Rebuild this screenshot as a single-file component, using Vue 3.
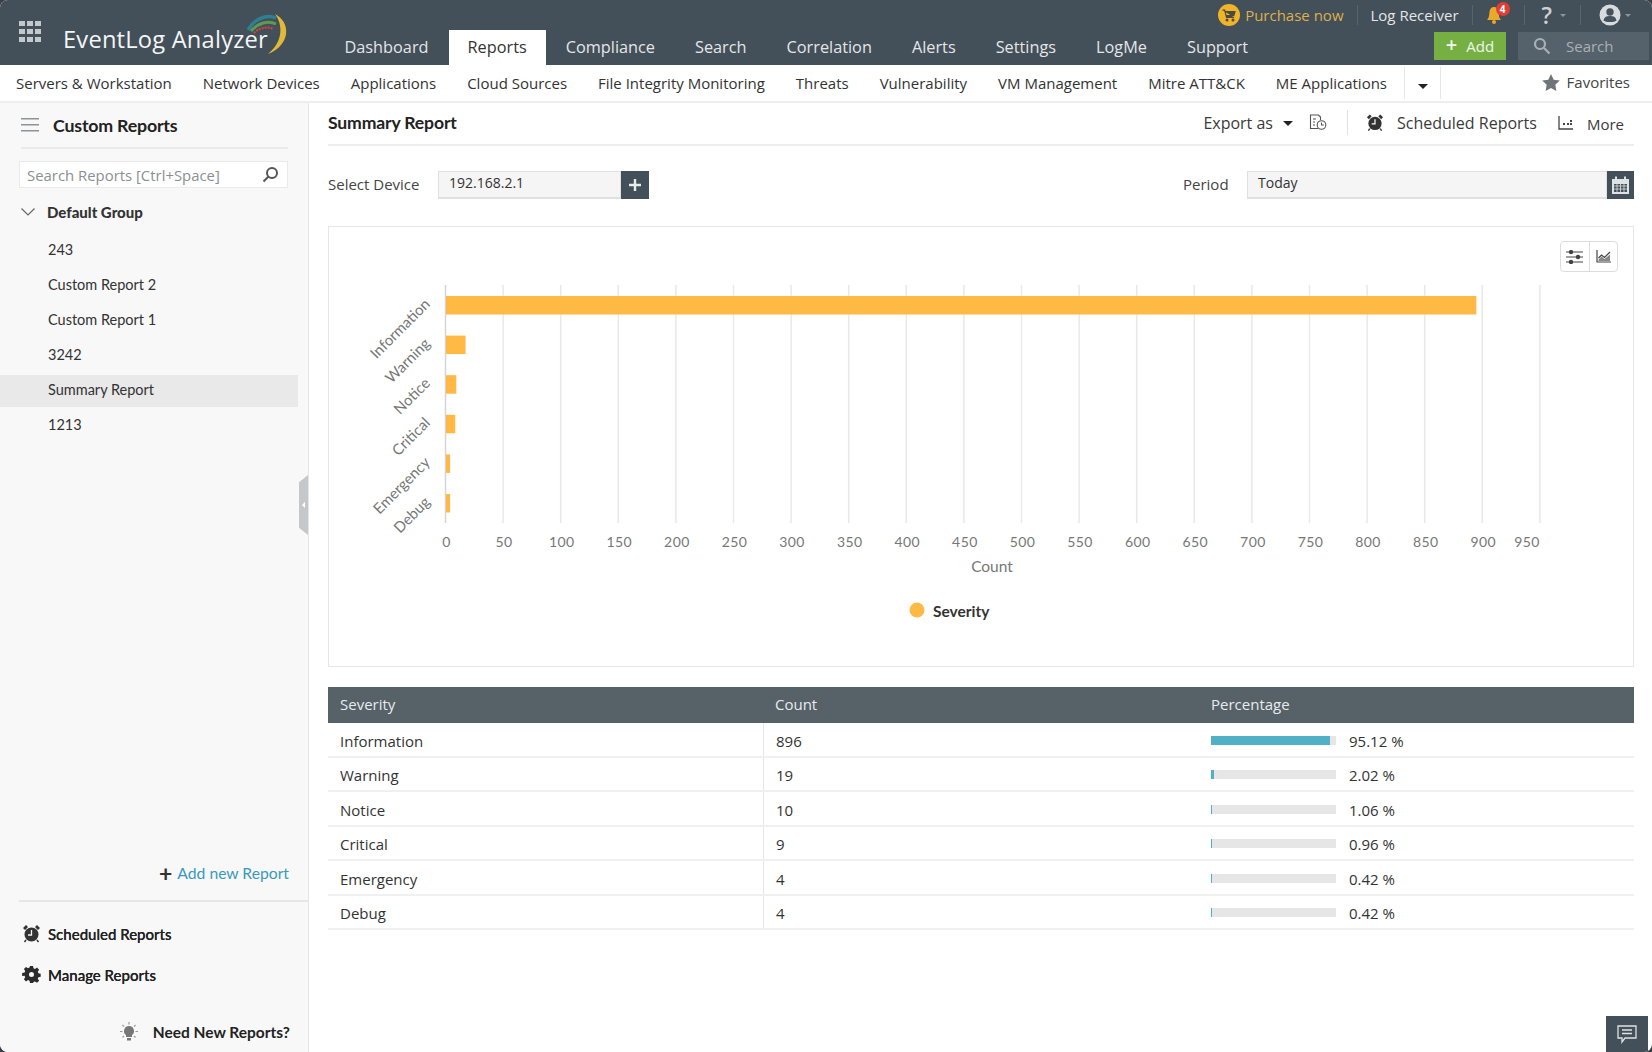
<script setup>
const tabs = ['Dashboard', 'Reports', 'Compliance', 'Search', 'Correlation', 'Alerts', 'Settings', 'LogMe', 'Support']
const subs = ['Servers & Workstation', 'Network Devices', 'Applications', 'Cloud Sources', 'File Integrity Monitoring', 'Threats', 'Vulnerability', 'VM Management', 'Mitre ATT&CK', 'ME Applications']
const reports = ['243', 'Custom Report 2', 'Custom Report 1', '3242', 'Summary Report', '1213']
const rows = [
  { name: 'Information', count: 896, pct: 95.12 },
  { name: 'Warning', count: 19, pct: 2.02 },
  { name: 'Notice', count: 10, pct: 1.06 },
  { name: 'Critical', count: 9, pct: 0.96 },
  { name: 'Emergency', count: 4, pct: 0.42 },
  { name: 'Debug', count: 4, pct: 0.42 }
]
const ticks = Array.from({ length: 20 }, (_, i) => i * 50)
const tx = v => 445.5 + v * 1.152
const barY = i => 296 + i * 39.6
const barW = c => c * (c > 100 ? 1.15 : 1.03)
</script>

<template>
  <div class="app">
    <header class="header">
      <svg class="waffle" width="24" height="24" viewBox="0 0 24 24" fill="#c3c8cc">
        <rect v-for="p in [[1,1],[9,1],[17,1],[1,9],[9,9],[17,9],[1,17],[9,17],[17,17]]" :key="p.join()" :x="p[0]" :y="p[1]" width="6" height="5" />
      </svg>
      <div class="logo">
        <span>EventLog Analyzer</span>
        <svg class="swoosh" width="44" height="44" viewBox="0 0 44 44" fill="none">
          <path d="M1 17C7 6 19 1 29 5" stroke="#2f7f93" stroke-width="3.500" />
          <path d="M4 18C11 10 21 7 29 11" stroke="#5d9a52" stroke-width="3" />
          <path d="M7 20C12 15 20 13 26 16" stroke="#d8453c" stroke-width="2" stroke-dasharray="2 1" />
          <path d="M28 1C44 9 44 32 21 41C35 30 37 13 28 1Z" fill="#e0b83a" />
        </svg>
      </div>
      <nav class="tabs">
        <a v-for="t in tabs" :key="t" class="tab" :class="{ active: t === 'Reports' }">{{ t }}</a>
      </nav>
      <div class="utils">
        <svg width="22" height="22" viewBox="0 0 22 22">
          <circle cx="11" cy="11" r="11" fill="#f0b429" />
          <path d="M4.500 6h2.200l1.800 7.500h7.600M7 7.500h10l-1.200 4.200H8" fill="#4a4a42" stroke="#4a4a42" stroke-width="1.200" />
          <circle cx="9" cy="16" r="1.500" fill="#4a4a42" /><circle cx="15" cy="16" r="1.500" fill="#4a4a42" />
        </svg>
        <span class="purchase">Purchase now</span>
        <i class="usep" />
        <span class="receiver">Log Receiver</span>
        <i class="usep" />
        <span class="bell">
          <svg width="18" height="20" viewBox="0 0 18 20"><path d="M1 16c2-2 2-4 2.500-8C4 4 6 3 8 3s4 1 4.500 5c.5 4 .5 6 2.500 8z" fill="#e9a92b" /><circle cx="8" cy="18" r="2" fill="#e9a92b" /></svg>
          <b>4</b>
        </span>
        <i class="usep" />
        <span class="help">?</span>
        <i class="mini" />
        <i class="usep" />
        <svg width="22" height="22" viewBox="0 0 22 22"><circle cx="11" cy="11" r="10.500" fill="#d9dcde" /><circle cx="11" cy="8" r="3.700" fill="#47535c" /><path d="M4.500 16.500c1-4 3.500-4.500 6.500-4.500s5.500.5 6.500 4.500c-1.500 1-3.500 1.500-6.500 1.500s-5-.5-6.500-1.500z" fill="#47535c" /></svg>
        <i class="mini" />
      </div>
      <div class="actions">
        <button class="add"><em>+</em>Add</button>
        <div class="top-search">
          <svg width="18" height="18" viewBox="0 0 18 18" fill="none" stroke="#a9b0b5" stroke-width="2.200"><circle cx="7" cy="7" r="5" /><path d="M11 11l5.500 5.500" /></svg>
          <span>Search</span>
        </div>
      </div>
    </header>

    <div class="subnav">
      <a v-for="s in subs" :key="s">{{ s }}</a>
      <span class="more-sub"><i /></span>
      <span class="fav">
        <svg width="18" height="17" viewBox="0 0 18 17"><path d="M9 0l2.700 5.700 6.100.8-4.500 4.300 1.100 6.200L9 14l-5.400 3 1.100-6.200L.2 6.500l6.100-.8z" fill="#6f7478" /></svg>
        Favorites
      </span>
    </div>

    <div class="body">
      <aside class="side">
        <div class="side-head">
          <svg width="18" height="14" viewBox="0 0 18 14" fill="#8d9397"><rect width="18" height="1.500" /><rect y="6" width="18" height="1.500" /><rect y="12" width="18" height="1.500" /></svg>
          <strong>Custom Reports</strong>
        </div>
        <div class="side-search">
          <span>Search Reports [Ctrl+Space]</span>
          <svg width="17" height="17" viewBox="0 0 17 17" fill="none" stroke="#555" stroke-width="2"><circle cx="10" cy="7" r="5" /><path d="M6.500 10.500L1.500 15.500" /></svg>
        </div>
        <div class="group">
          <svg width="14" height="8" viewBox="0 0 14 8" fill="none" stroke="#666" stroke-width="1.200"><path d="M.5.500L7 7 13.500.500" /></svg>
          <strong>Default Group</strong>
        </div>
        <ul class="rep-list">
          <li v-for="r in reports" :key="r" :class="{ sel: r === 'Summary Report' }">{{ r }}</li>
        </ul>
        <div class="add-new"><b>+</b><a>Add new Report</a></div>
        <div class="side-foot">
          <div class="foot-item">
            <svg width="19" height="19" viewBox="0 0 19 19"><path d="M1 4l3-3 2 2-3 3zM18 4l-3-3-2 2 3 3z" fill="#333" /><circle cx="9.500" cy="10.500" r="7" fill="#333" /><path d="M9.500 6v5H6" stroke="#f8f8f8" stroke-width="1.300" fill="none" /><path d="M4 16l-1.500 2M15 16l1.500 2" stroke="#333" stroke-width="1.500" /></svg>
            <span>Scheduled Reports</span>
          </div>
          <div class="foot-item">
            <svg width="19" height="19" viewBox="0 0 19 19"><path fill-rule="evenodd" d="M8 1h3l.5 2.300 1.500.6 2-1.300 2.100 2.100-1.300 2 .6 1.500 2.300.5v3l-2.300.5-.6 1.500 1.300 2-2.100 2.100-2-1.300-1.500.6L11 18H8l-.5-2.300-1.500-.6-2 1.300-2.100-2.100 1.300-2-.6-1.500L.1 11V8l2.500-.5.6-1.500-1.300-2L4 1.900l2 1.300 1.500-.6zM9.500 7a2.500 2.500 0 100 5 2.500 2.500 0 000-5z" fill="#2c2c2c" /></svg>
            <span>Manage Reports</span>
          </div>
          <div class="need">
            <svg width="18" height="20" viewBox="0 0 18 20"><path d="M9 4a5 5 0 00-3 9v2h6v-2a5 5 0 00-3-9z" fill="#777" /><rect x="7" y="16" width="4" height="2.500" fill="#777" /><path d="M9 0v2.500M2.500 3l1.500 1.500M15.500 3L14 4.500M0 9.500h2.500M15.500 9.500H18M2.500 15.500L4 14M15.500 15.500L14 14" stroke="#999" stroke-width="1.200" /></svg>
            <strong>Need New Reports?</strong>
          </div>
        </div>
        <div class="handle"><i /></div>
      </aside>

      <main class="main">
        <div class="title-row">
          <h1>Summary Report</h1>
          <div class="tools">
            <span>Export as</span>
            <i class="caret" />
            <svg class="doc" width="18" height="17" viewBox="0 0 18 17" fill="none" stroke="#555" stroke-width="1.100"><path d="M9 14.500H1.500V1h8l2 2v3" /><path d="M4 5h3M4 8h2M4 11h2" /><circle cx="12.500" cy="11" r="4.300" /><path d="M12.500 8.500V11h2.300" /></svg>
            <i class="tool-sep" />
            <svg width="18" height="19" viewBox="0 0 19 19"><path d="M1 4l3-3 2 2-3 3zM18 4l-3-3-2 2 3 3z" fill="#333" /><circle cx="9.500" cy="10.500" r="7" fill="#333" /><path d="M9.500 6v5H6" stroke="#fff" stroke-width="1.300" fill="none" /><path d="M4 16l-1.500 2M15 16l1.500 2" stroke="#333" stroke-width="1.500" /></svg>
            <span class="sched">Scheduled Reports</span>
            <svg class="more-ic" width="16" height="15" viewBox="0 0 16 15" fill="none" stroke="#444" stroke-width="1.300"><path d="M1 1v13h14" /><path d="M5 9h2M9 9h2M12 9h2M12 6h2" stroke-width="1.800" /></svg>
            <span class="more">More</span>
          </div>
        </div>

        <div class="filters">
          <label>Select Device</label>
          <div class="field dev">192.168.2.1</div>
          <button class="plus"><svg width="12" height="12" viewBox="0 0 12 12"><path d="M6 0v12M0 6h12" stroke="#e8eaec" stroke-width="2.400" /></svg></button>
          <label class="period">Period</label>
          <div class="field per">Today</div>
          <button class="cal">
            <svg width="19" height="19" viewBox="0 0 19 19"><path d="M1 3h17v15H1z" fill="#dfe2e4" /><rect x="4" y="0.500" width="2" height="5" fill="#dfe2e4" /><rect x="13" y="0.500" width="2" height="5" fill="#dfe2e4" /><path d="M3 8h13v8H3z" fill="#434f59" /><path d="M3 10h13M3 13h13M6 8v8M9.500 8v8M13 8v8" stroke="#dfe2e4" stroke-width=".8" /></svg>
          </button>
        </div>

        <section class="chart">
          <div class="chart-tools">
            <span>
              <svg width="17" height="14" viewBox="0 0 17 14" stroke="#444" stroke-width="1.200"><path d="M0 2h17M0 7h17M0 12h17" /><circle cx="5" cy="2" r="1.600" fill="#444" /><circle cx="12" cy="7" r="1.600" fill="#444" /><circle cx="5" cy="12" r="1.600" fill="#444" /></svg>
            </span>
            <span>
              <svg width="15" height="13" viewBox="0 0 15 13" fill="none" stroke="#444" stroke-width="1.200"><path d="M1 0v12h14" /><path d="M2.500 8l3-3 3 2.500L14 2" /><path d="M2.500 11V9.500l3-3 3 2.500L14 4.500V11z" fill="#888" stroke="none" /></svg>
            </span>
          </div>
          <svg class="plot" width="1304" height="439" viewBox="329 227 1304 439">
            <g v-for="t in ticks" :key="t">
              <line :x1="tx(t)" :x2="tx(t)" y1="285" y2="523" :stroke="t === 0 ? '#d4d4d4' : '#e8e8e8'" stroke-width="1.500" />
              <text :x="t === 950 ? tx(t) : tx(t) + 1" y="547" :text-anchor="t === 950 ? 'end' : 'middle'" class="tick">{{ t }}</text>
            </g>
            <rect v-for="(r, i) in rows" :key="r.name" x="446" :y="barY(i)" :width="barW(r.count)" height="18.500" fill="#ffb944" />
            <text v-for="(r, i) in rows" :key="'l' + r.name" x="431" :y="305 + i * 39.6" text-anchor="end" class="cat" :transform="`rotate(-45 431 ${305 + i * 39.6})`">{{ r.name }}</text>
            <text x="992" y="572" text-anchor="middle" class="axis">Count</text>
            <circle cx="917" cy="610" r="7.500" fill="#ffb944" />
            <text x="933" y="617" class="legend">Severity</text>
          </svg>
        </section>

        <div class="table">
          <div class="thead">
            <span class="c1">Severity</span><span class="c2">Count</span><span class="c3">Percentage</span>
          </div>
          <div v-for="r in rows" :key="r.name" class="tr">
            <span class="c1">{{ r.name }}</span>
            <span class="c2 bordered">{{ r.count }}</span>
            <span class="c3 pct">
              <i class="track"><i class="fill" :style="{ width: r.pct + '%' }" /></i>
              {{ r.pct.toFixed(2) }} %
            </span>
          </div>
        </div>
        <button class="chat">
          <svg width="20" height="19" viewBox="0 0 20 19" fill="none" stroke="#dfe2e4" stroke-width="1.300"><path d="M1 1h18v12H8l-3 4v-4H1z" /><path d="M5 5h10M5 8.500h10" /></svg>
        </button>
      </main>
    </div>
  </div>
</template>

<style>
html, body { background: #3b4046; }
</style>

<style scoped>
* { box-sizing: border-box; }
.app {
  width: 1652px; height: 1052px; overflow: hidden; background: #fff; border-radius: 8px;
  display: flex; flex-direction: column; font-family: "Open Sans", sans-serif; color: #333; position: relative;
}
.header { height: 65px; background: #434f59; display: flex; flex: none; position: relative; }
.waffle { margin: 20px 0 0 18px; flex: none; }
.logo { position: relative; margin: 23px 0 0 21px; width: 244px; color: #f4f5f6; font-size: 23.700px; font-weight: 500; line-height: 32px; white-space: nowrap; letter-spacing: .2px; flex: none; }
.swoosh { position: absolute; left: 184px; top: -10px; }
.tabs { display: flex; align-items: flex-end; margin-left: 17.500px; }
.tab { height: 35px; padding: 0 20px; line-height: 35px; color: #e3e6e8; font-size: 16.300px; }
.tab.active { background: #fff; color: #333; padding: 0 19px; }
.utils { position: absolute; right: 21px; top: 0; height: 30px; display: flex; align-items: center; font-size: 15px; white-space: nowrap; }
.purchase { color: #dcb04c; margin-left: 5px; }
.usep { width: 1px; height: 20px; background: #58646d; margin: 0 13px; flex: none; }
.receiver { color: #e3e6e8; }
.bell { position: relative; width: 21px; height: 22px; margin: 0 4px 0 0; }
.bell b { position: absolute; right: -3px; top: -2px; width: 14px; height: 14px; background: #e23c35; color: #fff; border-radius: 50%; font-size: 10px; line-height: 14px; text-align: center; }
.help { color: #cdd1d4; font-size: 23px; font-weight: 600; margin: 0 4px; line-height: 24px; }
.mini { width: 0; height: 0; border: 3px solid transparent; border-top: 3px solid #8c959b; margin: 3px 0 0 4px; }
.utils .mini + .usep { margin-left: 14px; margin-right: 18px; }
.actions { margin-left: auto; padding: 32px 3px 0 0; display: flex; gap: 12px; }
.add { width: 72px; height: 28px; background: #76b043; color: #f2f6ee; border: 0; font: 15px "Open Sans", sans-serif; padding: 0; }
.add em { font-style: normal; font-size: 20px; line-height: 16px; margin-right: 9px; font-weight: 600; }
.top-search { width: 131px; height: 28px; background: #56626b; color: #a9b0b5; font-size: 15px; display: flex; align-items: center; padding-left: 15px; gap: 15px; }
.subnav { height: 38px; flex: none; display: flex; align-items: center; padding-left: 16px; border-bottom: 2px solid #eee; font-size: 15px; }
.subnav a { margin-right: 31px; white-space: nowrap; }
.subnav a:nth-child(10) { margin-right: 17px; }
.more-sub { width: 37px; height: 32px; border-left: 1px solid #e6e6e6; border-right: 1px solid #e6e6e6; display: flex; align-items: center; justify-content: center; padding-top: 6px; }
.more-sub i { border: 5px solid transparent; border-top: 5px solid #222; border-bottom: 0; }
.fav { margin-left: auto; padding-right: 22px; display: flex; align-items: center; gap: 7px; color: #444; padding-bottom: 2px; }
.body { flex: 1; display: flex; min-height: 0; }
.side { width: 309px; flex: none; background: #f8f8f8; border-right: 1px solid #e6e6e6; position: relative; display: flex; flex-direction: column; font-family: Lato, sans-serif; font-size: 14.500px; }
.side-head { height: 46px; margin: 0 20px 12px 21px; border-bottom: 2px solid #eaeaea; display: flex; align-items: center; gap: 14px; }
.side-head strong { font-size: 17.800px; font-weight: 700; letter-spacing: -.2px; color: #222; }
.side-search { height: 27px; margin: 0 20px 0 19px; background: #fff; border: 1px solid #eaeaea; display: flex; align-items: center; justify-content: space-between; padding: 0 8px 0 7px; color: #8b8f92; font-family: "Open Sans", sans-serif; font-size: 14.900px; }
.group { height: 47px; display: flex; align-items: center; padding-left: 21px; gap: 12px; font-weight: 700; }
.group strong { font-size: 15px; color: #333; }
.rep-list { list-style: none; margin: -3px 10px 0 0; padding: 0; }
.rep-list li { height: 35px; line-height: 35px; padding-left: 48px; color: #333; }
.rep-list li.sel { background: #e9e9e9; height: 32px; margin-top: 3px; line-height: 30px; }
.add-new { margin-top: auto; padding: 0 19px 17px 0; text-align: right; font-size: 15.700px; display: flex; justify-content: flex-end; align-items: center; gap: 5px; }
.add-new b { font-size: 23px; line-height: 20px; color: #333; }
.add-new a { color: #3a98bd; }
.side-foot { margin-left: 19px; border-top: 2px solid #e6e6e6; height: 152px; display: flex; flex-direction: column; padding-top: 11px; font-size: 15px; }
.foot-item { height: 41px; display: flex; align-items: center; gap: 7px; padding-left: 3px; flex: none; }
.foot-item span { font-weight: 500; color: #222; text-shadow: 0 0 .4px #222; }
.need { margin-top: 27px; display: flex; align-items: center; justify-content: flex-end; gap: 15px; padding-right: 18px; }
.need strong { font-size: 15.500px; font-weight: 700; color: #222; }
.handle { position: absolute; right: 0; top: 372px; width: 9px; height: 60px; background: #c4c8cb; clip-path: polygon(100% 0, 100% 100%, 0 88%, 0 12%); display: flex; align-items: center; justify-content: center; }
.handle i { border: 3px solid transparent; border-right: 3px solid #fff; border-left: 0; }
.main { flex: 1; min-width: 0; padding: 0 18px 0 19px; position: relative; }
.title-row { height: 43px; border-bottom: 2px solid #eee; display: flex; align-items: center; justify-content: space-between; padding-bottom: 2px; }
h1 { margin: 0; font-family: Lato, sans-serif; font-size: 17.600px; font-weight: 700; color: #222; letter-spacing: -.15px; }
.tools { display: flex; align-items: center; font-size: 16px; color: #3a3a3a; padding-right: 10px; }
.caret { border: 5px solid transparent; border-top: 5px solid #222; border-bottom: 0; margin: 2px 0 0 10px; }
.doc { margin-left: 16px; }
.tool-sep { width: 1px; height: 25px; background: #e2e2e2; margin: 0 18px 0 20px; }
.sched { margin-left: 13px; }
.more-ic { margin-left: 21px; }
.more { margin-left: 13px; padding-top: 2px; font-size: 15px; }
.filters { display: flex; align-items: center; margin-top: 25px; font-size: 15px; height: 28px; }
.filters label { width: 110px; padding-bottom: 3px; color: #444; }
.field { height: 28px; background: #f5f5f5; border: 1px solid #e0e0e0; border-bottom-width: 2px; font-size: 14px; padding: 0 0 4px 10px; display: flex; align-items: center; }
.dev { width: 183px; }
.plus, .cal { height: 28px; width: 28px; background: #434f59; border: 0; padding: 0; display: flex; align-items: center; justify-content: center; }
.filters .period { width: 64px; margin-left: auto; flex: none; }
.per { width: 360px; }
.cal { width: 27px; }
.chart { position: relative; height: 441px; margin-top: 27px; border: 1px solid #e6e6e6; }
.plot { display: block; }
.chart-tools { position: absolute; right: 15px; top: 14px; height: 31px; width: 58px; border: 1px solid #dcdcdc; border-radius: 4px; display: flex; }
.chart-tools span { flex: 1; display: flex; align-items: center; justify-content: center; }
.chart-tools span + span { border-left: 1px solid #dcdcdc; }
.tick { font: 14px Lato, sans-serif; fill: #777; letter-spacing: .4px; }
.cat { font: 15px Lato, sans-serif; fill: #777; }
.axis { font: 15.500px Lato, sans-serif; fill: #777; }
.legend { font: 700 15.500px Lato, sans-serif; fill: #333; }
.table { margin-top: 20px; font-size: 15px; }
.thead { height: 36px; background: #566168; color: #e8ebed; display: flex; align-items: center; padding-bottom: 2px; }
.thead span { height: 100%; }
.tr { height: 34.500px; display: flex; border-bottom: 2px solid #f0f0f0; }
.tr span { padding-top: 3px; }
.c1 { width: 435px; padding-left: 12px; flex: none; display: flex; align-items: center; }
.c2 { width: 448px; padding-left: 12px; flex: none; display: flex; align-items: center; }
.c2.bordered { border-left: 1px solid #e6e6e6; }
.c3 { flex: 1; display: flex; align-items: center; white-space: nowrap; }
.track { width: 125px; height: 9px; background: #e6e6e6; margin-right: 13px; display: block; flex: none; margin-top: -1px; }
.fill { display: block; height: 100%; background: #50b0c6; min-width: 1px; }
.chat { position: absolute; right: 4px; bottom: 0; width: 42px; height: 36px; background: #434f59; border: 0; padding: 0; display: flex; align-items: center; justify-content: center; }
</style>
